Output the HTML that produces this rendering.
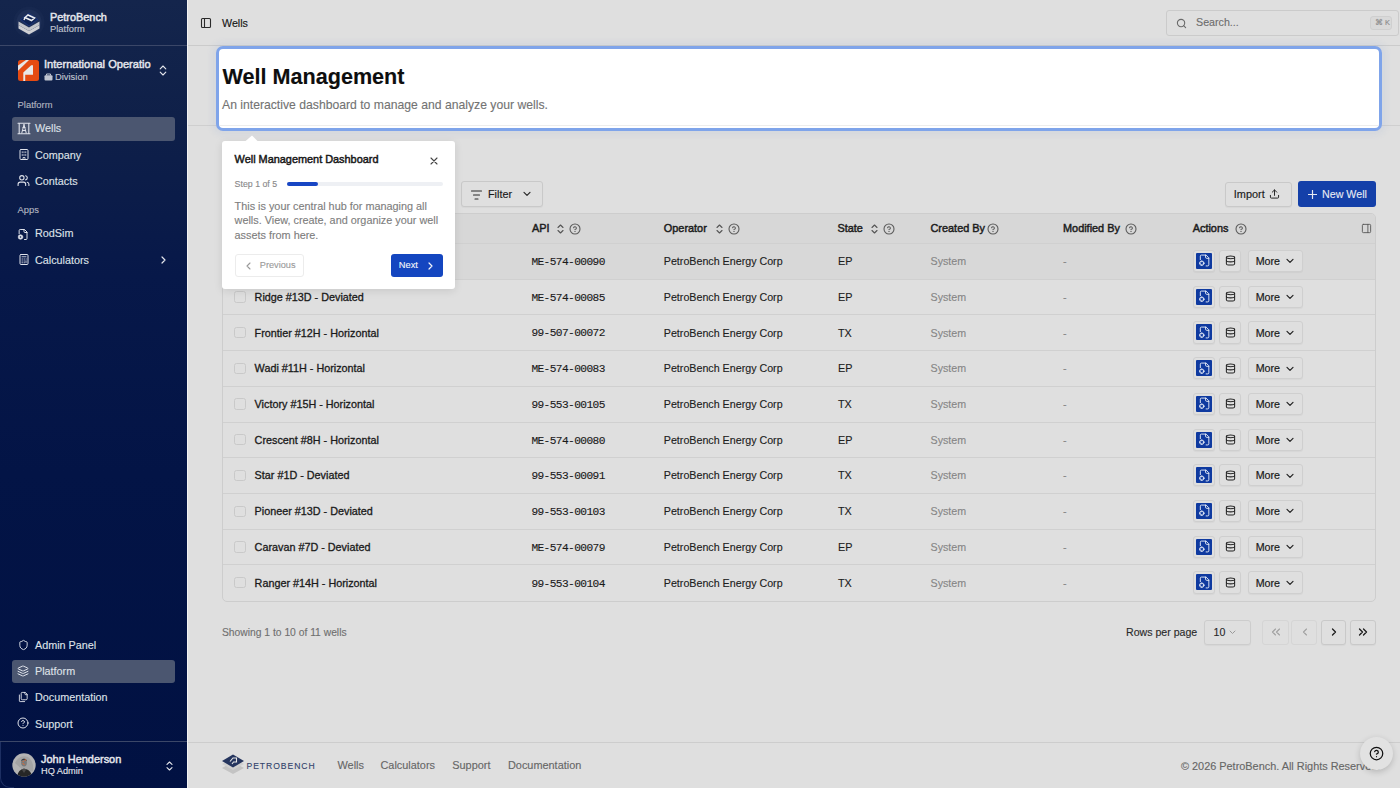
<!DOCTYPE html>
<html><head><meta charset="utf-8">
<style>
*{box-sizing:border-box;margin:0;padding:0}
html,body{width:1400px;height:788px;overflow:hidden;background:#dfdfdf;font-family:"Liberation Sans",sans-serif;color:#161616}
.a{position:absolute}
.t{position:absolute;line-height:1;white-space:nowrap;-webkit-text-stroke:0.12px currentColor}
#sb{position:absolute;left:0;top:0;width:187px;height:788px;background:linear-gradient(#14254c 0%,#0f2049 15%,#071849 35%,#031446 60%,#011142 100%)}
.sbt{color:#e4e6ec}
.lbl{color:#b2b6c0;font-size:9.4px}
.sel{position:absolute;left:11.5px;width:163.5px;height:23.5px;border-radius:3px;background:#4b5670}
.nt{font-size:10.8px;color:#dfe1e7;left:35px}
.ic{position:absolute;fill:none;stroke-linecap:round;stroke-linejoin:round}
.sbi{stroke:#dfe2ea;stroke-width:2}
.btn{position:absolute;border:1px solid #c9c9c9;border-radius:3px;background:#dfdfdf;box-shadow:0 1px 1px rgba(0,0,0,.04)}
.hd{font-size:10.9px;font-weight:normal;color:#1c1c1c;-webkit-text-stroke:0.45px #1c1c1c}
.cell{font-size:10.8px;color:#1a1a1a}
.mono{font-family:"Liberation Mono",monospace;font-size:11.2px;letter-spacing:-0.6px;color:#1a1a1a}
.gry{color:#868686}
.k{stroke:#666;stroke-width:2}
</style></head>
<body>
<!-- ============ SIDEBAR ============ -->
<div id="sb">
  <svg class="a" style="left:12px;top:5px" width="34" height="34" viewBox="0 0 34 34">
    <circle cx="17" cy="17" r="15.5" fill="#17284f"/>
    <circle cx="17" cy="17" r="12.5" fill="#1e2f57"/>
    <path d="M6.5 20 L17 26 L27.5 20 L27.5 23.5 L17 29.5 L6.5 23.5Z" fill="#cfd0d4"/>
    <path d="M6.5 16.5 L17 22.5 L27.5 16.5 L27.5 20 L17 26 L6.5 20Z" fill="#c3c5ca"/>
    <path d="M8.5 14.5 L17 8.2 L25.5 14.5 L17 20.8Z" fill="#0f2252" stroke="#1f3c92" stroke-width="0.6"/>
    <path d="M13 12.5 L16 10 L22.5 13 L19.5 15.5Z" fill="none" stroke="#eceef2" stroke-width="1.5"/>
    <path d="M13 12.5 L12 15" fill="none" stroke="#eceef2" stroke-width="1.5"/>
  </svg>
  <div class="t sbt" style="left:50px;top:11.5px;font-size:10.9px;-webkit-text-stroke:0.45px #e4e6ec">PetroBench</div>
  <div class="t" style="left:50px;top:24px;font-size:9.4px;color:#c0c5d0">Platform</div>
  <div class="a" style="left:0;top:45px;width:187px;height:1px;background:#3b4768"></div>

  <svg class="a" style="left:17.5px;top:59.5px" width="21" height="21" viewBox="0 0 21 21">
    <rect width="21" height="21" rx="2.5" fill="#e54b12"/>
    <path d="M8 0 L11 0 L0 10.8 L0 5.5Z" fill="#e6e6e6"/>
    <path d="M5.3 21 L5.3 12.5 L13.2 5.2 L15 5.2 L15 14.8 L7.2 14.8 L7.2 21Z" fill="#e8e8e8"/>
  </svg>
  <div class="t sbt" style="left:44px;top:59.2px;font-size:11.1px;-webkit-text-stroke:0.45px #e4e6ec">International Operatio</div>
  <svg class="a" style="left:44px;top:72.5px" width="9" height="8" viewBox="0 0 9 8"><rect x="0.5" y="2.3" width="8" height="5.2" rx="1" fill="#c0c5d0"/><path d="M2.5 2.5 V1 H6.5 V2.5" fill="none" stroke="#c0c5d0" stroke-width="1"/></svg>
  <div class="t" style="left:55px;top:72px;font-size:9.4px;color:#c0c5d0">Division</div>
  <svg class="ic" style="left:159px;top:65px" width="8" height="11" viewBox="0 0 8 11"><path d="M1.2 3.8 L4 1 L6.8 3.8 M1.2 7.2 L4 10 L6.8 7.2" stroke="#e4e6ec" stroke-width="1.1"/></svg>

  <div class="t lbl" style="left:17.6px;top:100.2px">Platform</div>
  <div class="sel" style="top:117px"></div>
  <svg class="ic" style="left:16.5px;top:122px" width="14" height="13" viewBox="0 0 14 13" stroke="#dfe2ea" stroke-width="1.1"><path d="M1 1.2 H13 M1 11.8 H13 M2.2 1.2 V11.8 M11.8 1.2 V11.8"/><path d="M7 2.5 L4.8 11 M7 2.5 L9.2 11 M5.4 8.5 H8.6 M6 5.5 H8" stroke-width="1"/></svg>
  <div class="t nt" style="top:122.9px">Wells</div>
  <svg class="ic sbi" style="left:17.5px;top:148px" width="12" height="13" viewBox="0 0 24 24"><rect x="4" y="2" width="16" height="20" rx="2"/><path d="M10 22v-4h4v4M8.5 6.5v2M12 6.5v2M15.5 6.5v2M8.5 12v2M12 12v2M15.5 12v2" stroke-width="1.6"/></svg>
  <div class="t nt" style="top:149.7px">Company</div>
  <svg class="ic sbi" style="left:17px;top:174px" width="13" height="13" viewBox="0 0 24 24"><path d="M16 21v-2a4 4 0 0 0-4-4H6a4 4 0 0 0-4 4v2"/><circle cx="9" cy="7" r="4"/><path d="M22 21v-2a4 4 0 0 0-3-3.87M16 3.13a4 4 0 0 1 0 7.75"/></svg>
  <div class="t nt" style="top:175.7px">Contacts</div>

  <div class="t lbl" style="left:17.6px;top:205.1px">Apps</div>
  <svg class="ic sbi" style="left:17px;top:227.5px" width="12" height="13" viewBox="0 0 24 24"><path d="M14 2v4a2 2 0 0 0 2 2h4"/><path d="M4.3 10.5V4a2 2 0 0 1 2-2H15l5 5v13a2 2 0 0 1-2 2h-3"/><circle cx="7" cy="17" r="4.6" fill="#dfe2ea" stroke-width="1.2"/><circle cx="7" cy="17" r="1.6" fill="#0a1848" stroke="none"/></svg>
  <div class="t nt" style="top:228px">RodSim</div>
  <svg class="ic sbi" style="left:17.5px;top:253px" width="12" height="13" viewBox="0 0 24 24"><rect x="4" y="2" width="16" height="20" rx="2"/><path d="M8 6.5h8M8 11h1M12 11h1M16 11h.5M8 15h1M12 15h1M16 14.5v4M8 18.5h1M12 18.5h1" stroke-width="1.7"/></svg>
  <div class="t nt" style="top:254.5px">Calculators</div>
  <svg class="ic" style="left:160px;top:256px" width="7" height="8" viewBox="0 0 7 8"><path d="M2 1 L5 4 L2 7" stroke="#e4e6ec" stroke-width="1.2"/></svg>

  <svg class="ic sbi" style="left:17.5px;top:639px" width="11" height="12" viewBox="0 0 24 24"><path d="M20 13c0 5-3.5 7.5-7.66 8.95a1 1 0 0 1-.67-.01C7.5 20.5 4 18 4 13V6a1 1 0 0 1 1-1c2 0 4.5-1.2 6.24-2.72a1.17 1.17 0 0 1 1.52 0C14.51 3.81 17 5 19 5a1 1 0 0 1 1 1z"/></svg>
  <div class="t nt" style="top:639.7px">Admin Panel</div>
  <div class="sel" style="top:659.5px"></div>
  <svg class="ic sbi" style="left:17px;top:665px" width="12" height="12" viewBox="0 0 24 24"><path d="m12.83 2.18a2 2 0 0 0-1.66 0L2.6 6.08a1 1 0 0 0 0 1.83l8.58 3.91a2 2 0 0 0 1.66 0l8.58-3.9a1 1 0 0 0 0-1.83Z"/><path d="m22 17.65-9.17 4.16a2 2 0 0 1-1.66 0L2 17.65"/><path d="m22 12.65-9.17 4.16a2 2 0 0 1-1.66 0L2 12.65"/></svg>
  <div class="t nt" style="top:665.9px">Platform</div>
  <svg class="ic sbi" style="left:17.5px;top:691px" width="11" height="12" viewBox="0 0 24 24"><path d="M20 7h-3a2 2 0 0 1-2-2V2"/><path d="M9 18a2 2 0 0 1-2-2V4a2 2 0 0 1 2-2h7l4 4v10a2 2 0 0 1-2 2Z"/><path d="M3 7.6v12.8A1.6 1.6 0 0 0 4.6 22h9.8"/></svg>
  <div class="t nt" style="top:692.3px">Documentation</div>
  <svg class="ic sbi" style="left:17px;top:717px" width="12" height="12" viewBox="0 0 24 24"><circle cx="12" cy="12" r="10"/><path d="M9.09 9a3 3 0 0 1 5.83 1c0 2-3 3-3 3M12 17h.01"/></svg>
  <div class="t nt" style="top:718.6px">Support</div>
  <div class="a" style="left:0;top:741px;width:187px;height:1px;background:#3b4768"></div>
  <svg class="a" style="left:11.5px;top:753px" width="24" height="24" viewBox="0 0 24 24">
    <defs><clipPath id="cp"><circle cx="12" cy="12" r="11.7"/></clipPath></defs>
    <circle cx="12" cy="12" r="11.7" fill="#b4b4b4"/>
    <g clip-path="url(#cp)">
      <path d="M3 10 C6 4 10 2 16 4 C20 7 22 12 21 18 L14 20Z" fill="#a4a4a4"/>
      <path d="M5 25 C5.5 19 8 16.5 12 15.5 C16.5 16.5 19.5 18.5 20.5 25Z" fill="#262626"/>
      <path d="M9.5 16 L12 20 L14.5 16Z" fill="#4a4a4a"/>
      <ellipse cx="12" cy="9.5" rx="2.9" ry="4" fill="#7a7a7a"/>
      <path d="M9.2 8 C9.3 5 14.7 5 14.8 8 C14 6.5 10 6.5 9.2 8Z" fill="#3a3a3a"/>
      <circle cx="13.3" cy="7" r="0.75" fill="#ee6a2c"/><circle cx="11.2" cy="8.5" r="0.6" fill="#ee6a2c"/><circle cx="11" cy="10.5" r="0.6" fill="#ee6a2c"/><circle cx="12" cy="11.5" r="0.6" fill="#ee6a2c"/>
    </g>
  </svg>
  <div class="a" style="left:0;top:742px;width:14px;height:46px;border-left:1px solid #1d2f62;border-bottom:1px solid #1d2f62;border-bottom-left-radius:10px"></div>
  <div class="t sbt" style="left:41px;top:754.4px;font-size:10.95px;-webkit-text-stroke:0.45px #e4e6ec">John Henderson</div>
  <div class="t sbt" style="left:41px;top:767.1px;font-size:9.2px">HQ Admin</div>
  <svg class="ic" style="left:165.5px;top:760.5px" width="7" height="10" viewBox="0 0 7 10"><path d="M1 3.4 L3.5 1 L6 3.4 M1 6.6 L3.5 9 L6 6.6" stroke="#e4e6ec" stroke-width="1.1"/></svg>
</div>
<div class="a" style="left:187px;top:0;width:1px;height:788px;background:#f2f2f2"></div>
<!-- ============ TOP BAR ============ -->
<div class="a" style="left:188px;top:45px;width:1212px;height:1px;background:#cbcbcb"></div>
<svg class="ic" style="left:199.5px;top:17px" width="12" height="12" viewBox="0 0 24 24" stroke="#2a2a2a" stroke-width="2.2"><rect x="3" y="3" width="18" height="18" rx="2"/><path d="M9 3v18"/></svg>
<div class="t" style="left:222px;top:17.7px;font-size:10.7px;color:#161616;-webkit-text-stroke:0.15px #161616">Wells</div>
<div class="a" style="left:1166px;top:10px;width:232.5px;height:26px;border:1px solid #cbcbcb;border-radius:3px;background:#dfdfdf"></div>
<svg class="ic" style="left:1175.5px;top:17.5px" width="11" height="11" viewBox="0 0 24 24" stroke="#6a6a6a" stroke-width="2.4"><circle cx="11" cy="11" r="8"/><path d="m21 21-4.3-4.3"/></svg>
<div class="t" style="left:1196px;top:17.3px;font-size:10.7px;color:#6d6d6d">Search...</div>
<div class="a" style="left:1370px;top:16px;width:22px;height:14px;border:1px solid #cfcfcf;border-radius:3px;background:#d9d9d9"></div>
<div class="t" style="left:1375px;top:19px;font-size:7.5px;color:#8a8a8a">&#8984; K</div>

<!-- ============ PAGE HEADER (highlighted) ============ -->
<div class="a" style="left:188px;top:125px;width:1212px;height:1px;background:#cfcfcf"></div>
<div class="a" style="left:216px;top:46px;width:1166px;height:85px;border:3px solid #7fa4ea;border-radius:7px;background:#fff;box-shadow:0 0 6px 4px rgba(110,145,215,0.09)"></div>
<div class="a" style="left:219px;top:125px;width:1160px;height:1px;background:#ededed"></div>
<div class="t" style="left:222.5px;top:66.4px;font-size:21.6px;font-weight:bold;color:#0e0e0e">Well Management</div>
<div class="t" style="left:222px;top:99px;font-size:12.2px;color:#737373">An interactive dashboard to manage and analyze your wells.</div>

<!-- ============ TOOLBAR ============ -->
<div class="btn" style="left:461px;top:181px;width:81.5px;height:26px"></div>
<svg class="ic" style="left:470.5px;top:189.5px" width="11" height="10" viewBox="0 0 11 10" stroke="#2a2a2a" stroke-width="1.1" stroke-linecap="butt"><path d="M0.5 1 H10.5 M2.5 5 H8.5 M4 9 H7"/></svg>
<div class="t" style="left:488px;top:188.8px;font-size:10.8px;color:#1a1a1a;-webkit-text-stroke:0.15px #1a1a1a">Filter</div>
<svg class="ic" style="left:523px;top:191px" width="8" height="6" viewBox="0 0 8 6" stroke="#2a2a2a" stroke-width="1.2"><path d="M1 1.3 L4 4.3 L7 1.3"/></svg>

<div class="btn" style="left:1224.5px;top:181.5px;width:67px;height:25.5px"></div>
<div class="t" style="left:1233.8px;top:188.6px;font-size:10.9px;color:#1a1a1a;-webkit-text-stroke:0.15px #1a1a1a">Import</div>
<svg class="ic" style="left:1268.5px;top:189px" width="11" height="10" viewBox="0 0 24 22" stroke="#2a2a2a" stroke-width="2.2"><path d="M12 14V2M7 7l5-5 5 5M3 14v4a2 2 0 0 0 2 2h14a2 2 0 0 0 2-2v-4"/></svg>
<div class="a" style="left:1298px;top:181px;width:78px;height:26px;border-radius:3px;background:#1440a9"></div>
<svg class="ic" style="left:1308px;top:189.5px" width="9" height="9" viewBox="0 0 9 9" stroke="#e6e9f2" stroke-width="1.2"><path d="M4.5 0.5 V8.5 M0.5 4.5 H8.5"/></svg>
<div class="t" style="left:1322px;top:188.7px;font-size:10.7px;color:#e8ebf3;-webkit-text-stroke:0.1px #e8ebf3">New Well</div>
<!-- ============ TABLE ============ -->
<div class="a" style="left:222px;top:213px;width:1154px;height:388.5px;border:1px solid #cdcdcd;border-radius:5px;overflow:hidden">
<div class="a" style="left:0;top:0;width:1152px;height:29.5px;background:#d7d7d7"></div>
<div class="a" style="left:0;top:29.5px;width:1152px;height:35.72px;background:#d8d8d8"></div>
<div class="a" style="left:0;top:28.90px;width:1152px;height:1px;background:#d0d0d0"></div>
<div class="a" style="left:0;top:64.62px;width:1152px;height:1px;background:#d0d0d0"></div>
<div class="a" style="left:0;top:100.34px;width:1152px;height:1px;background:#d0d0d0"></div>
<div class="a" style="left:0;top:136.06px;width:1152px;height:1px;background:#d0d0d0"></div>
<div class="a" style="left:0;top:171.78px;width:1152px;height:1px;background:#d0d0d0"></div>
<div class="a" style="left:0;top:207.50px;width:1152px;height:1px;background:#d0d0d0"></div>
<div class="a" style="left:0;top:243.22px;width:1152px;height:1px;background:#d0d0d0"></div>
<div class="a" style="left:0;top:278.94px;width:1152px;height:1px;background:#d0d0d0"></div>
<div class="a" style="left:0;top:314.66px;width:1152px;height:1px;background:#d0d0d0"></div>
<div class="a" style="left:0;top:350.38px;width:1152px;height:1px;background:#d0d0d0"></div>
</div>
<div class="t hd" style="left:532px;top:222.9px">API</div>
<svg class="ic" style="left:556.5px;top:223.8px" width="7" height="10" viewBox="0 0 7 10" stroke="#555" stroke-width="1.1"><path d="M1 3.5 L3.5 1 L6 3.5 M1 6.5 L3.5 9 L6 6.5"/></svg>
<svg class="ic" style="left:568.5px;top:222.8px" width="12" height="12" viewBox="0 0 12 12" stroke="#5c5c5c" stroke-width="1.1"><circle cx="6" cy="6" r="5"/><path d="M4.6 4.7a1.45 1.45 0 0 1 2.8.5c0 .9-1.4 1.3-1.4 1.3"/><path d="M6 8.4h.01" stroke-width="1.3"/></svg>
<div class="t hd" style="left:663.8px;top:222.9px">Operator</div>
<svg class="ic" style="left:715.5px;top:223.8px" width="7" height="10" viewBox="0 0 7 10" stroke="#555" stroke-width="1.1"><path d="M1 3.5 L3.5 1 L6 3.5 M1 6.5 L3.5 9 L6 6.5"/></svg>
<svg class="ic" style="left:727.5px;top:222.8px" width="12" height="12" viewBox="0 0 12 12" stroke="#5c5c5c" stroke-width="1.1"><circle cx="6" cy="6" r="5"/><path d="M4.6 4.7a1.45 1.45 0 0 1 2.8.5c0 .9-1.4 1.3-1.4 1.3"/><path d="M6 8.4h.01" stroke-width="1.3"/></svg>
<div class="t hd" style="left:837.5px;top:222.9px">State</div>
<svg class="ic" style="left:870.5px;top:223.8px" width="7" height="10" viewBox="0 0 7 10" stroke="#555" stroke-width="1.1"><path d="M1 3.5 L3.5 1 L6 3.5 M1 6.5 L3.5 9 L6 6.5"/></svg>
<svg class="ic" style="left:882.8px;top:222.8px" width="12" height="12" viewBox="0 0 12 12" stroke="#5c5c5c" stroke-width="1.1"><circle cx="6" cy="6" r="5"/><path d="M4.6 4.7a1.45 1.45 0 0 1 2.8.5c0 .9-1.4 1.3-1.4 1.3"/><path d="M6 8.4h.01" stroke-width="1.3"/></svg>
<div class="t hd" style="left:930.5px;top:222.9px">Created By</div>
<svg class="ic" style="left:987.0px;top:222.8px" width="12" height="12" viewBox="0 0 12 12" stroke="#5c5c5c" stroke-width="1.1"><circle cx="6" cy="6" r="5"/><path d="M4.6 4.7a1.45 1.45 0 0 1 2.8.5c0 .9-1.4 1.3-1.4 1.3"/><path d="M6 8.4h.01" stroke-width="1.3"/></svg>
<div class="t hd" style="left:1063px;top:222.9px">Modified By</div>
<svg class="ic" style="left:1124.5px;top:222.8px" width="12" height="12" viewBox="0 0 12 12" stroke="#5c5c5c" stroke-width="1.1"><circle cx="6" cy="6" r="5"/><path d="M4.6 4.7a1.45 1.45 0 0 1 2.8.5c0 .9-1.4 1.3-1.4 1.3"/><path d="M6 8.4h.01" stroke-width="1.3"/></svg>
<div class="t hd" style="left:1192.7px;top:222.9px">Actions</div>
<svg class="ic" style="left:1234.8px;top:222.8px" width="12" height="12" viewBox="0 0 12 12" stroke="#5c5c5c" stroke-width="1.1"><circle cx="6" cy="6" r="5"/><path d="M4.6 4.7a1.45 1.45 0 0 1 2.8.5c0 .9-1.4 1.3-1.4 1.3"/><path d="M6 8.4h.01" stroke-width="1.3"/></svg>
<svg class="ic" style="left:1360.5px;top:222.5px" width="11" height="11" viewBox="0 0 24 24" stroke="#5a5a5a" stroke-width="2"><rect x="3" y="3" width="18" height="18" rx="2"/><path d="M15 3v18"/></svg>
<div class="a" style="left:234.4px;top:255.50px;width:11.4px;height:11.4px;border:1px solid #c9c9c9;border-radius:2.5px"></div>
<div class="t cell" style="left:254.6px;top:256.06px;-webkit-text-stroke:0.3px #1a1a1a">Eagle #9H - Horizontal</div>
<div class="t mono" style="left:531.4px;top:257.02px">ME-574-00090</div>
<div class="t cell" style="left:663.8px;top:256.06px;font-size:10.7px;color:#202020">PetroBench Energy Corp</div>
<div class="t cell" style="left:838px;top:256.06px;color:#202020">EP</div>
<div class="t cell gry" style="left:930.5px;top:256.06px;font-size:10.7px">System</div>
<div class="t cell gry" style="left:1063px;top:256.06px">-</div>
<div class="btn" style="left:1193px;top:249.90px;width:22px;height:22.2px;border-color:#cfcfcf"></div>
<div class="a" style="left:1196px;top:252.90px;width:16px;height:16px;background:#0f3aa0;border-radius:1px"></div>
<svg class="ic" style="left:1197.5px;top:254.40px" width="13" height="13" viewBox="0 0 24 24" stroke="#dfe6f5" stroke-width="1.8"><path d="M14 2v4a2 2 0 0 0 2 2h4"/><path d="M4.3 10.5V4a2 2 0 0 1 2-2H15l5 5v13a2 2 0 0 1-2 2h-3"/><circle cx="7" cy="17" r="4"/><path d="M7 13v1.5M7 19.5V21M3 17h1.5M9.5 17H11"/></svg>
<div class="btn" style="left:1219px;top:249.90px;width:22.2px;height:22.2px;border-color:#cfcfcf"></div>
<svg class="ic" style="left:1224.5px;top:255.40px" width="11" height="11" viewBox="0 0 24 24" stroke="#222" stroke-width="2.2"><ellipse cx="12" cy="5" rx="9" ry="3"/><path d="M3 5V19A9 3 0 0 0 21 19V5"/><path d="M3 12A9 3 0 0 0 21 12"/></svg>
<div class="btn" style="left:1248.3px;top:249.90px;width:54.7px;height:22.2px;border-color:#cfcfcf"></div>
<div class="t cell" style="left:1255.7px;top:256.14px;font-size:10.7px;-webkit-text-stroke:0.2px #1a1a1a">More</div>
<svg class="ic" style="left:1285.5px;top:258.40px" width="8" height="6" viewBox="0 0 8 6" stroke="#222" stroke-width="1.2"><path d="M1 1.3 L4 4.3 L7 1.3"/></svg>
<div class="a" style="left:234.4px;top:291.22px;width:11.4px;height:11.4px;border:1px solid #c9c9c9;border-radius:2.5px"></div>
<div class="t cell" style="left:254.6px;top:291.78px;-webkit-text-stroke:0.3px #1a1a1a">Ridge #13D - Deviated</div>
<div class="t mono" style="left:531.4px;top:292.74px">ME-574-00085</div>
<div class="t cell" style="left:663.8px;top:291.78px;font-size:10.7px;color:#202020">PetroBench Energy Corp</div>
<div class="t cell" style="left:838px;top:291.78px;color:#202020">EP</div>
<div class="t cell gry" style="left:930.5px;top:291.78px;font-size:10.7px">System</div>
<div class="t cell gry" style="left:1063px;top:291.78px">-</div>
<div class="btn" style="left:1193px;top:285.62px;width:22px;height:22.2px;border-color:#cfcfcf"></div>
<div class="a" style="left:1196px;top:288.62px;width:16px;height:16px;background:#0f3aa0;border-radius:1px"></div>
<svg class="ic" style="left:1197.5px;top:290.12px" width="13" height="13" viewBox="0 0 24 24" stroke="#dfe6f5" stroke-width="1.8"><path d="M14 2v4a2 2 0 0 0 2 2h4"/><path d="M4.3 10.5V4a2 2 0 0 1 2-2H15l5 5v13a2 2 0 0 1-2 2h-3"/><circle cx="7" cy="17" r="4"/><path d="M7 13v1.5M7 19.5V21M3 17h1.5M9.5 17H11"/></svg>
<div class="btn" style="left:1219px;top:285.62px;width:22.2px;height:22.2px;border-color:#cfcfcf"></div>
<svg class="ic" style="left:1224.5px;top:291.12px" width="11" height="11" viewBox="0 0 24 24" stroke="#222" stroke-width="2.2"><ellipse cx="12" cy="5" rx="9" ry="3"/><path d="M3 5V19A9 3 0 0 0 21 19V5"/><path d="M3 12A9 3 0 0 0 21 12"/></svg>
<div class="btn" style="left:1248.3px;top:285.62px;width:54.7px;height:22.2px;border-color:#cfcfcf"></div>
<div class="t cell" style="left:1255.7px;top:291.86px;font-size:10.7px;-webkit-text-stroke:0.2px #1a1a1a">More</div>
<svg class="ic" style="left:1285.5px;top:294.12px" width="8" height="6" viewBox="0 0 8 6" stroke="#222" stroke-width="1.2"><path d="M1 1.3 L4 4.3 L7 1.3"/></svg>
<div class="a" style="left:234.4px;top:326.94px;width:11.4px;height:11.4px;border:1px solid #c9c9c9;border-radius:2.5px"></div>
<div class="t cell" style="left:254.6px;top:327.50px;-webkit-text-stroke:0.3px #1a1a1a">Frontier #12H - Horizontal</div>
<div class="t mono" style="left:531.4px;top:328.46px">99-507-00072</div>
<div class="t cell" style="left:663.8px;top:327.50px;font-size:10.7px;color:#202020">PetroBench Energy Corp</div>
<div class="t cell" style="left:838px;top:327.50px;color:#202020">TX</div>
<div class="t cell gry" style="left:930.5px;top:327.50px;font-size:10.7px">System</div>
<div class="t cell gry" style="left:1063px;top:327.50px">-</div>
<div class="btn" style="left:1193px;top:321.34px;width:22px;height:22.2px;border-color:#cfcfcf"></div>
<div class="a" style="left:1196px;top:324.34px;width:16px;height:16px;background:#0f3aa0;border-radius:1px"></div>
<svg class="ic" style="left:1197.5px;top:325.84px" width="13" height="13" viewBox="0 0 24 24" stroke="#dfe6f5" stroke-width="1.8"><path d="M14 2v4a2 2 0 0 0 2 2h4"/><path d="M4.3 10.5V4a2 2 0 0 1 2-2H15l5 5v13a2 2 0 0 1-2 2h-3"/><circle cx="7" cy="17" r="4"/><path d="M7 13v1.5M7 19.5V21M3 17h1.5M9.5 17H11"/></svg>
<div class="btn" style="left:1219px;top:321.34px;width:22.2px;height:22.2px;border-color:#cfcfcf"></div>
<svg class="ic" style="left:1224.5px;top:326.84px" width="11" height="11" viewBox="0 0 24 24" stroke="#222" stroke-width="2.2"><ellipse cx="12" cy="5" rx="9" ry="3"/><path d="M3 5V19A9 3 0 0 0 21 19V5"/><path d="M3 12A9 3 0 0 0 21 12"/></svg>
<div class="btn" style="left:1248.3px;top:321.34px;width:54.7px;height:22.2px;border-color:#cfcfcf"></div>
<div class="t cell" style="left:1255.7px;top:327.58px;font-size:10.7px;-webkit-text-stroke:0.2px #1a1a1a">More</div>
<svg class="ic" style="left:1285.5px;top:329.84px" width="8" height="6" viewBox="0 0 8 6" stroke="#222" stroke-width="1.2"><path d="M1 1.3 L4 4.3 L7 1.3"/></svg>
<div class="a" style="left:234.4px;top:362.66px;width:11.4px;height:11.4px;border:1px solid #c9c9c9;border-radius:2.5px"></div>
<div class="t cell" style="left:254.6px;top:363.22px;-webkit-text-stroke:0.3px #1a1a1a">Wadi #11H - Horizontal</div>
<div class="t mono" style="left:531.4px;top:364.18px">ME-574-00083</div>
<div class="t cell" style="left:663.8px;top:363.22px;font-size:10.7px;color:#202020">PetroBench Energy Corp</div>
<div class="t cell" style="left:838px;top:363.22px;color:#202020">EP</div>
<div class="t cell gry" style="left:930.5px;top:363.22px;font-size:10.7px">System</div>
<div class="t cell gry" style="left:1063px;top:363.22px">-</div>
<div class="btn" style="left:1193px;top:357.06px;width:22px;height:22.2px;border-color:#cfcfcf"></div>
<div class="a" style="left:1196px;top:360.06px;width:16px;height:16px;background:#0f3aa0;border-radius:1px"></div>
<svg class="ic" style="left:1197.5px;top:361.56px" width="13" height="13" viewBox="0 0 24 24" stroke="#dfe6f5" stroke-width="1.8"><path d="M14 2v4a2 2 0 0 0 2 2h4"/><path d="M4.3 10.5V4a2 2 0 0 1 2-2H15l5 5v13a2 2 0 0 1-2 2h-3"/><circle cx="7" cy="17" r="4"/><path d="M7 13v1.5M7 19.5V21M3 17h1.5M9.5 17H11"/></svg>
<div class="btn" style="left:1219px;top:357.06px;width:22.2px;height:22.2px;border-color:#cfcfcf"></div>
<svg class="ic" style="left:1224.5px;top:362.56px" width="11" height="11" viewBox="0 0 24 24" stroke="#222" stroke-width="2.2"><ellipse cx="12" cy="5" rx="9" ry="3"/><path d="M3 5V19A9 3 0 0 0 21 19V5"/><path d="M3 12A9 3 0 0 0 21 12"/></svg>
<div class="btn" style="left:1248.3px;top:357.06px;width:54.7px;height:22.2px;border-color:#cfcfcf"></div>
<div class="t cell" style="left:1255.7px;top:363.30px;font-size:10.7px;-webkit-text-stroke:0.2px #1a1a1a">More</div>
<svg class="ic" style="left:1285.5px;top:365.56px" width="8" height="6" viewBox="0 0 8 6" stroke="#222" stroke-width="1.2"><path d="M1 1.3 L4 4.3 L7 1.3"/></svg>
<div class="a" style="left:234.4px;top:398.38px;width:11.4px;height:11.4px;border:1px solid #c9c9c9;border-radius:2.5px"></div>
<div class="t cell" style="left:254.6px;top:398.94px;-webkit-text-stroke:0.3px #1a1a1a">Victory #15H - Horizontal</div>
<div class="t mono" style="left:531.4px;top:399.90px">99-553-00105</div>
<div class="t cell" style="left:663.8px;top:398.94px;font-size:10.7px;color:#202020">PetroBench Energy Corp</div>
<div class="t cell" style="left:838px;top:398.94px;color:#202020">TX</div>
<div class="t cell gry" style="left:930.5px;top:398.94px;font-size:10.7px">System</div>
<div class="t cell gry" style="left:1063px;top:398.94px">-</div>
<div class="btn" style="left:1193px;top:392.78px;width:22px;height:22.2px;border-color:#cfcfcf"></div>
<div class="a" style="left:1196px;top:395.78px;width:16px;height:16px;background:#0f3aa0;border-radius:1px"></div>
<svg class="ic" style="left:1197.5px;top:397.28px" width="13" height="13" viewBox="0 0 24 24" stroke="#dfe6f5" stroke-width="1.8"><path d="M14 2v4a2 2 0 0 0 2 2h4"/><path d="M4.3 10.5V4a2 2 0 0 1 2-2H15l5 5v13a2 2 0 0 1-2 2h-3"/><circle cx="7" cy="17" r="4"/><path d="M7 13v1.5M7 19.5V21M3 17h1.5M9.5 17H11"/></svg>
<div class="btn" style="left:1219px;top:392.78px;width:22.2px;height:22.2px;border-color:#cfcfcf"></div>
<svg class="ic" style="left:1224.5px;top:398.28px" width="11" height="11" viewBox="0 0 24 24" stroke="#222" stroke-width="2.2"><ellipse cx="12" cy="5" rx="9" ry="3"/><path d="M3 5V19A9 3 0 0 0 21 19V5"/><path d="M3 12A9 3 0 0 0 21 12"/></svg>
<div class="btn" style="left:1248.3px;top:392.78px;width:54.7px;height:22.2px;border-color:#cfcfcf"></div>
<div class="t cell" style="left:1255.7px;top:399.02px;font-size:10.7px;-webkit-text-stroke:0.2px #1a1a1a">More</div>
<svg class="ic" style="left:1285.5px;top:401.28px" width="8" height="6" viewBox="0 0 8 6" stroke="#222" stroke-width="1.2"><path d="M1 1.3 L4 4.3 L7 1.3"/></svg>
<div class="a" style="left:234.4px;top:434.10px;width:11.4px;height:11.4px;border:1px solid #c9c9c9;border-radius:2.5px"></div>
<div class="t cell" style="left:254.6px;top:434.66px;-webkit-text-stroke:0.3px #1a1a1a">Crescent #8H - Horizontal</div>
<div class="t mono" style="left:531.4px;top:435.62px">ME-574-00080</div>
<div class="t cell" style="left:663.8px;top:434.66px;font-size:10.7px;color:#202020">PetroBench Energy Corp</div>
<div class="t cell" style="left:838px;top:434.66px;color:#202020">EP</div>
<div class="t cell gry" style="left:930.5px;top:434.66px;font-size:10.7px">System</div>
<div class="t cell gry" style="left:1063px;top:434.66px">-</div>
<div class="btn" style="left:1193px;top:428.50px;width:22px;height:22.2px;border-color:#cfcfcf"></div>
<div class="a" style="left:1196px;top:431.50px;width:16px;height:16px;background:#0f3aa0;border-radius:1px"></div>
<svg class="ic" style="left:1197.5px;top:433.00px" width="13" height="13" viewBox="0 0 24 24" stroke="#dfe6f5" stroke-width="1.8"><path d="M14 2v4a2 2 0 0 0 2 2h4"/><path d="M4.3 10.5V4a2 2 0 0 1 2-2H15l5 5v13a2 2 0 0 1-2 2h-3"/><circle cx="7" cy="17" r="4"/><path d="M7 13v1.5M7 19.5V21M3 17h1.5M9.5 17H11"/></svg>
<div class="btn" style="left:1219px;top:428.50px;width:22.2px;height:22.2px;border-color:#cfcfcf"></div>
<svg class="ic" style="left:1224.5px;top:434.00px" width="11" height="11" viewBox="0 0 24 24" stroke="#222" stroke-width="2.2"><ellipse cx="12" cy="5" rx="9" ry="3"/><path d="M3 5V19A9 3 0 0 0 21 19V5"/><path d="M3 12A9 3 0 0 0 21 12"/></svg>
<div class="btn" style="left:1248.3px;top:428.50px;width:54.7px;height:22.2px;border-color:#cfcfcf"></div>
<div class="t cell" style="left:1255.7px;top:434.74px;font-size:10.7px;-webkit-text-stroke:0.2px #1a1a1a">More</div>
<svg class="ic" style="left:1285.5px;top:437.00px" width="8" height="6" viewBox="0 0 8 6" stroke="#222" stroke-width="1.2"><path d="M1 1.3 L4 4.3 L7 1.3"/></svg>
<div class="a" style="left:234.4px;top:469.82px;width:11.4px;height:11.4px;border:1px solid #c9c9c9;border-radius:2.5px"></div>
<div class="t cell" style="left:254.6px;top:470.38px;-webkit-text-stroke:0.3px #1a1a1a">Star #1D - Deviated</div>
<div class="t mono" style="left:531.4px;top:471.34px">99-553-00091</div>
<div class="t cell" style="left:663.8px;top:470.38px;font-size:10.7px;color:#202020">PetroBench Energy Corp</div>
<div class="t cell" style="left:838px;top:470.38px;color:#202020">TX</div>
<div class="t cell gry" style="left:930.5px;top:470.38px;font-size:10.7px">System</div>
<div class="t cell gry" style="left:1063px;top:470.38px">-</div>
<div class="btn" style="left:1193px;top:464.22px;width:22px;height:22.2px;border-color:#cfcfcf"></div>
<div class="a" style="left:1196px;top:467.22px;width:16px;height:16px;background:#0f3aa0;border-radius:1px"></div>
<svg class="ic" style="left:1197.5px;top:468.72px" width="13" height="13" viewBox="0 0 24 24" stroke="#dfe6f5" stroke-width="1.8"><path d="M14 2v4a2 2 0 0 0 2 2h4"/><path d="M4.3 10.5V4a2 2 0 0 1 2-2H15l5 5v13a2 2 0 0 1-2 2h-3"/><circle cx="7" cy="17" r="4"/><path d="M7 13v1.5M7 19.5V21M3 17h1.5M9.5 17H11"/></svg>
<div class="btn" style="left:1219px;top:464.22px;width:22.2px;height:22.2px;border-color:#cfcfcf"></div>
<svg class="ic" style="left:1224.5px;top:469.72px" width="11" height="11" viewBox="0 0 24 24" stroke="#222" stroke-width="2.2"><ellipse cx="12" cy="5" rx="9" ry="3"/><path d="M3 5V19A9 3 0 0 0 21 19V5"/><path d="M3 12A9 3 0 0 0 21 12"/></svg>
<div class="btn" style="left:1248.3px;top:464.22px;width:54.7px;height:22.2px;border-color:#cfcfcf"></div>
<div class="t cell" style="left:1255.7px;top:470.46px;font-size:10.7px;-webkit-text-stroke:0.2px #1a1a1a">More</div>
<svg class="ic" style="left:1285.5px;top:472.72px" width="8" height="6" viewBox="0 0 8 6" stroke="#222" stroke-width="1.2"><path d="M1 1.3 L4 4.3 L7 1.3"/></svg>
<div class="a" style="left:234.4px;top:505.54px;width:11.4px;height:11.4px;border:1px solid #c9c9c9;border-radius:2.5px"></div>
<div class="t cell" style="left:254.6px;top:506.10px;-webkit-text-stroke:0.3px #1a1a1a">Pioneer #13D - Deviated</div>
<div class="t mono" style="left:531.4px;top:507.06px">99-553-00103</div>
<div class="t cell" style="left:663.8px;top:506.10px;font-size:10.7px;color:#202020">PetroBench Energy Corp</div>
<div class="t cell" style="left:838px;top:506.10px;color:#202020">TX</div>
<div class="t cell gry" style="left:930.5px;top:506.10px;font-size:10.7px">System</div>
<div class="t cell gry" style="left:1063px;top:506.10px">-</div>
<div class="btn" style="left:1193px;top:499.94px;width:22px;height:22.2px;border-color:#cfcfcf"></div>
<div class="a" style="left:1196px;top:502.94px;width:16px;height:16px;background:#0f3aa0;border-radius:1px"></div>
<svg class="ic" style="left:1197.5px;top:504.44px" width="13" height="13" viewBox="0 0 24 24" stroke="#dfe6f5" stroke-width="1.8"><path d="M14 2v4a2 2 0 0 0 2 2h4"/><path d="M4.3 10.5V4a2 2 0 0 1 2-2H15l5 5v13a2 2 0 0 1-2 2h-3"/><circle cx="7" cy="17" r="4"/><path d="M7 13v1.5M7 19.5V21M3 17h1.5M9.5 17H11"/></svg>
<div class="btn" style="left:1219px;top:499.94px;width:22.2px;height:22.2px;border-color:#cfcfcf"></div>
<svg class="ic" style="left:1224.5px;top:505.44px" width="11" height="11" viewBox="0 0 24 24" stroke="#222" stroke-width="2.2"><ellipse cx="12" cy="5" rx="9" ry="3"/><path d="M3 5V19A9 3 0 0 0 21 19V5"/><path d="M3 12A9 3 0 0 0 21 12"/></svg>
<div class="btn" style="left:1248.3px;top:499.94px;width:54.7px;height:22.2px;border-color:#cfcfcf"></div>
<div class="t cell" style="left:1255.7px;top:506.18px;font-size:10.7px;-webkit-text-stroke:0.2px #1a1a1a">More</div>
<svg class="ic" style="left:1285.5px;top:508.44px" width="8" height="6" viewBox="0 0 8 6" stroke="#222" stroke-width="1.2"><path d="M1 1.3 L4 4.3 L7 1.3"/></svg>
<div class="a" style="left:234.4px;top:541.26px;width:11.4px;height:11.4px;border:1px solid #c9c9c9;border-radius:2.5px"></div>
<div class="t cell" style="left:254.6px;top:541.82px;-webkit-text-stroke:0.3px #1a1a1a">Caravan #7D - Deviated</div>
<div class="t mono" style="left:531.4px;top:542.78px">ME-574-00079</div>
<div class="t cell" style="left:663.8px;top:541.82px;font-size:10.7px;color:#202020">PetroBench Energy Corp</div>
<div class="t cell" style="left:838px;top:541.82px;color:#202020">EP</div>
<div class="t cell gry" style="left:930.5px;top:541.82px;font-size:10.7px">System</div>
<div class="t cell gry" style="left:1063px;top:541.82px">-</div>
<div class="btn" style="left:1193px;top:535.66px;width:22px;height:22.2px;border-color:#cfcfcf"></div>
<div class="a" style="left:1196px;top:538.66px;width:16px;height:16px;background:#0f3aa0;border-radius:1px"></div>
<svg class="ic" style="left:1197.5px;top:540.16px" width="13" height="13" viewBox="0 0 24 24" stroke="#dfe6f5" stroke-width="1.8"><path d="M14 2v4a2 2 0 0 0 2 2h4"/><path d="M4.3 10.5V4a2 2 0 0 1 2-2H15l5 5v13a2 2 0 0 1-2 2h-3"/><circle cx="7" cy="17" r="4"/><path d="M7 13v1.5M7 19.5V21M3 17h1.5M9.5 17H11"/></svg>
<div class="btn" style="left:1219px;top:535.66px;width:22.2px;height:22.2px;border-color:#cfcfcf"></div>
<svg class="ic" style="left:1224.5px;top:541.16px" width="11" height="11" viewBox="0 0 24 24" stroke="#222" stroke-width="2.2"><ellipse cx="12" cy="5" rx="9" ry="3"/><path d="M3 5V19A9 3 0 0 0 21 19V5"/><path d="M3 12A9 3 0 0 0 21 12"/></svg>
<div class="btn" style="left:1248.3px;top:535.66px;width:54.7px;height:22.2px;border-color:#cfcfcf"></div>
<div class="t cell" style="left:1255.7px;top:541.90px;font-size:10.7px;-webkit-text-stroke:0.2px #1a1a1a">More</div>
<svg class="ic" style="left:1285.5px;top:544.16px" width="8" height="6" viewBox="0 0 8 6" stroke="#222" stroke-width="1.2"><path d="M1 1.3 L4 4.3 L7 1.3"/></svg>
<div class="a" style="left:234.4px;top:576.98px;width:11.4px;height:11.4px;border:1px solid #c9c9c9;border-radius:2.5px"></div>
<div class="t cell" style="left:254.6px;top:577.54px;-webkit-text-stroke:0.3px #1a1a1a">Ranger #14H - Horizontal</div>
<div class="t mono" style="left:531.4px;top:578.50px">99-553-00104</div>
<div class="t cell" style="left:663.8px;top:577.54px;font-size:10.7px;color:#202020">PetroBench Energy Corp</div>
<div class="t cell" style="left:838px;top:577.54px;color:#202020">TX</div>
<div class="t cell gry" style="left:930.5px;top:577.54px;font-size:10.7px">System</div>
<div class="t cell gry" style="left:1063px;top:577.54px">-</div>
<div class="btn" style="left:1193px;top:571.38px;width:22px;height:22.2px;border-color:#cfcfcf"></div>
<div class="a" style="left:1196px;top:574.38px;width:16px;height:16px;background:#0f3aa0;border-radius:1px"></div>
<svg class="ic" style="left:1197.5px;top:575.88px" width="13" height="13" viewBox="0 0 24 24" stroke="#dfe6f5" stroke-width="1.8"><path d="M14 2v4a2 2 0 0 0 2 2h4"/><path d="M4.3 10.5V4a2 2 0 0 1 2-2H15l5 5v13a2 2 0 0 1-2 2h-3"/><circle cx="7" cy="17" r="4"/><path d="M7 13v1.5M7 19.5V21M3 17h1.5M9.5 17H11"/></svg>
<div class="btn" style="left:1219px;top:571.38px;width:22.2px;height:22.2px;border-color:#cfcfcf"></div>
<svg class="ic" style="left:1224.5px;top:576.88px" width="11" height="11" viewBox="0 0 24 24" stroke="#222" stroke-width="2.2"><ellipse cx="12" cy="5" rx="9" ry="3"/><path d="M3 5V19A9 3 0 0 0 21 19V5"/><path d="M3 12A9 3 0 0 0 21 12"/></svg>
<div class="btn" style="left:1248.3px;top:571.38px;width:54.7px;height:22.2px;border-color:#cfcfcf"></div>
<div class="t cell" style="left:1255.7px;top:577.62px;font-size:10.7px;-webkit-text-stroke:0.2px #1a1a1a">More</div>
<svg class="ic" style="left:1285.5px;top:579.88px" width="8" height="6" viewBox="0 0 8 6" stroke="#222" stroke-width="1.2"><path d="M1 1.3 L4 4.3 L7 1.3"/></svg>
<!-- ============ PAGINATION ============ -->
<div class="t" style="left:222px;top:628.1px;font-size:10.3px;color:#6f6f6f">Showing 1 to 10 of 11 wells</div>
<div class="t" style="left:1126px;top:627.4px;font-size:10.6px;color:#2a2a2a">Rows per page</div>
<div class="btn" style="left:1204.3px;top:619.7px;width:46.3px;height:25.7px;border-color:#cdcdcd"></div>
<div class="t" style="left:1213.6px;top:627.4px;font-size:10.6px;color:#2a2a2a">10</div>
<svg class="ic" style="left:1229px;top:630px" width="7" height="5" viewBox="0 0 7 5" stroke="#9a9a9a" stroke-width="1"><path d="M1 1 L3.5 3.5 L6 1"/></svg>
<div class="btn" style="left:1262.2px;top:619.7px;width:26.4px;height:25.7px;border-color:#d5d5d5;box-shadow:none"></div>
<div class="btn" style="left:1291.3px;top:619.7px;width:26.2px;height:25.7px;border-color:#d5d5d5;box-shadow:none"></div>
<div class="btn" style="left:1320.7px;top:619.7px;width:25.7px;height:25.7px;border-color:#c9c9c9"></div>
<div class="btn" style="left:1350px;top:619.7px;width:25.8px;height:25.7px;border-color:#c9c9c9"></div>
<svg class="ic" style="left:1270.5px;top:628px" width="10" height="8" viewBox="0 0 10 8" stroke="#a0a0a0" stroke-width="1.1"><path d="M4.5 1 L1.5 4 L4.5 7 M8.5 1 L5.5 4 L8.5 7"/></svg>
<svg class="ic" style="left:1302px;top:628px" width="6" height="8" viewBox="0 0 6 8" stroke="#a0a0a0" stroke-width="1.1"><path d="M4.5 1 L1.5 4 L4.5 7"/></svg>
<svg class="ic" style="left:1330.5px;top:628px" width="6" height="8" viewBox="0 0 6 8" stroke="#1c1c1c" stroke-width="1.3"><path d="M1.5 1 L4.5 4 L1.5 7"/></svg>
<svg class="ic" style="left:1358px;top:628px" width="10" height="8" viewBox="0 0 10 8" stroke="#1c1c1c" stroke-width="1.3"><path d="M1.5 1 L4.5 4 L1.5 7 M5.5 1 L8.5 4 L5.5 7"/></svg>

<!-- ============ FOOTER ============ -->
<div class="a" style="left:188px;top:741.5px;width:1212px;height:1px;background:#cdcdcd"></div>
<svg class="a" style="left:221px;top:753px" width="24" height="25" viewBox="0 0 24 25">
  <path d="M1 15 L12 9 L23 15 L12 21Z" fill="#c3c3c3"/>
  <path d="M1 11 L12 5 L23 11 L12 17Z" fill="#cfcfcf"/>
  <path d="M1 8 L12 1.5 L23 8 L12 14.5Z" fill="#25355e"/>
  <path d="M9 8.5 L12 5 H15.5 V9 H12.5 L11 11" fill="none" stroke="#e8e8e8" stroke-width="1.1"/>
</svg>
<div class="t" style="left:246.5px;top:762.2px;font-size:8.6px;color:#2f3f69;letter-spacing:0.95px;-webkit-text-stroke:0.1px #2f3f69">PETROBENCH</div>
<div class="t" style="left:337.5px;top:760.1px;font-size:10.9px;color:#666">Wells</div>
<div class="t" style="left:380.5px;top:760.1px;font-size:10.9px;color:#666">Calculators</div>
<div class="t" style="left:452.3px;top:760.1px;font-size:10.9px;color:#666">Support</div>
<div class="t" style="left:508px;top:760.1px;font-size:10.9px;color:#666">Documentation</div>
<div class="t" style="left:1181px;top:760.8px;font-size:10.9px;color:#666">&copy; 2026 PetroBench. All Rights Reserved.</div>
<div class="a" style="left:1359.5px;top:736.5px;width:33px;height:33px;border-radius:50%;background:#e2e2e2;box-shadow:0 2px 6px rgba(0,0,0,.18)"></div>
<svg class="ic" style="left:1368.5px;top:746px" width="15" height="15" viewBox="0 0 24 24" stroke="#111" stroke-width="2"><circle cx="12" cy="12" r="10"/><path d="M9.09 9a3 3 0 0 1 5.83 1c0 2-3 3-3 3M12 17h.01"/></svg>

<!-- ============ POPOVER ============ -->
<div class="a" style="left:222px;top:140.5px;width:232.5px;height:148.5px;background:#fff;border-radius:3px;box-shadow:0 2px 8px rgba(0,0,0,.10)"></div>
<svg class="a" style="left:245px;top:135px" width="14" height="7" viewBox="0 0 14 7"><path d="M0 6.5 L7 0.5 L13 6.5Z" fill="#fff"/></svg>
<div class="t" style="left:234.6px;top:154.4px;font-size:10.9px;color:#161616;-webkit-text-stroke:0.45px #161616">Well Management Dashboard</div>
<svg class="ic" style="left:429.5px;top:157px" width="8" height="8" viewBox="0 0 8 8" stroke="#444" stroke-width="1.1"><path d="M1 1 L7 7 M7 1 L1 7"/></svg>
<div class="t" style="left:234.6px;top:179.6px;font-size:8.8px;color:#888">Step 1 of 5</div>
<div class="a" style="left:286.5px;top:182px;width:156.5px;height:4px;border-radius:2px;background:#eef0f4"></div>
<div class="a" style="left:286.5px;top:182px;width:31.5px;height:4px;border-radius:2px;background:#1846c4"></div>
<div class="t" style="left:234.6px;top:200.5px;font-size:10.85px;color:#7d7d7d">This is your central hub for managing all</div>
<div class="t" style="left:234.6px;top:215.1px;font-size:10.85px;color:#7d7d7d">wells. View, create, and organize your well</div>
<div class="t" style="left:234.6px;top:229.7px;font-size:10.85px;color:#7d7d7d">assets from here.</div>
<div class="a" style="left:234.6px;top:254.3px;width:69px;height:23px;border:1px solid #ececec;border-radius:3px"></div>
<svg class="ic" style="left:245.5px;top:262px" width="5" height="8" viewBox="0 0 5 8" stroke="#999" stroke-width="1.1"><path d="M4 1 L1 4 L4 7"/></svg>
<div class="t" style="left:259.8px;top:261.1px;font-size:9.2px;color:#9a9a9a">Previous</div>
<div class="a" style="left:391px;top:254.3px;width:51.5px;height:23px;border-radius:3px;background:#1446c0"></div>
<div class="t" style="left:398.8px;top:261px;font-size:9.3px;color:#f4f6fb">Next</div>
<svg class="ic" style="left:427.5px;top:262px" width="5" height="8" viewBox="0 0 5 8" stroke="#f4f6fb" stroke-width="1.2"><path d="M1 1 L4 4 L1 7"/></svg>
</body></html>
